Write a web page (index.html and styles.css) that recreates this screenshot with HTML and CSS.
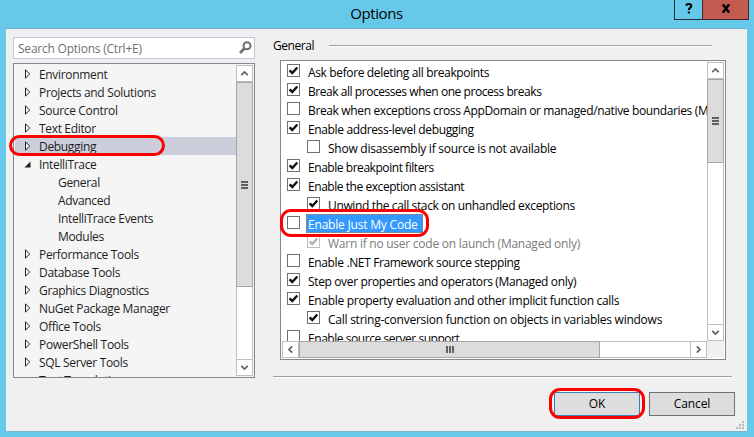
FILE: index.html
```html
<!DOCTYPE html>
<html lang="en">
<head>
<meta charset="utf-8">
<title>Options</title>
<link rel="stylesheet" href="styles.css">
</head>
<body>
<svg width="0" height="0" class="defs">
  <symbol id="closed" viewBox="0 0 6 10"><path d="M.5 .9v8.200L4.700 5z" fill="#fff" stroke="#1e1e1e" stroke-width="1"/></symbol>
  <symbol id="open" viewBox="0 0 7 7"><path d="M6.500 .5v6h-6z" fill="#1e1e1e"/></symbol>
  <symbol id="check" viewBox="0 0 11 11"><path d="M1.600 5.400L4.300 8L9.300 2.500" fill="none" stroke="currentColor" stroke-width="2.500"/></symbol>
  <symbol id="chev" viewBox="0 0 9 9"><path d="M1.300 6.200L4.500 3L7.700 6.200" fill="none" stroke="#606060" stroke-width="1.700"/></symbol>
</svg>
<div class="window">
  <header class="titlebar">
    <h1>Options</h1>
    <button class="cap help"><svg width="8" height="11" viewBox="0 0 8 11"><path d="M1.200 2.600Q1.500 1 3.800 1Q6.300 1 6.300 3Q6.300 4.300 4.800 5Q3.900 5.500 3.900 7" fill="none" stroke="#000" stroke-width="2"/><path d="M2.800 8.500h2.200v2H2.800z"/></svg></button>
    <button class="cap close"><svg width="10" height="9" viewBox="0 0 10 9"><path d="M1.800 .3L8.200 8.700M8.200 .3L1.800 8.700" stroke="#000" stroke-width="2.500"/></svg></button>
  </header>
  <main class="client">
    <div class="panes">
      <section class="nav">
        <div class="search"><span>Search Options (Ctrl+E)</span><svg width="13" height="13" viewBox="0 0 13 13"><circle cx="8" cy="4.700" r="3.500" fill="none" stroke="#717171" stroke-width="2"/><path d="M5.300 7.500L1 12" stroke="#717171" stroke-width="2.600"/></svg></div>
        <div class="tree">
          <ul class="nodes">
            <li><svg class="tri"><use href="#closed"/></svg><span>Environment</span></li>
            <li><svg class="tri"><use href="#closed"/></svg><span>Projects and Solutions</span></li>
            <li><svg class="tri"><use href="#closed"/></svg><span>Source Control</span></li>
            <li><svg class="tri"><use href="#closed"/></svg><span>Text Editor</span></li>
            <li class="current"><svg class="tri"><use href="#closed"/></svg><span>Debugging</span><i class="ring ring-tree"></i></li>
            <li><svg class="tri expanded"><use href="#open"/></svg><span>IntelliTrace</span></li>
            <li class="child"><span>General</span></li>
            <li class="child"><span>Advanced</span></li>
            <li class="child"><span>IntelliTrace Events</span></li>
            <li class="child"><span>Modules</span></li>
            <li><svg class="tri"><use href="#closed"/></svg><span>Performance Tools</span></li>
            <li><svg class="tri"><use href="#closed"/></svg><span>Database Tools</span></li>
            <li><svg class="tri"><use href="#closed"/></svg><span>Graphics Diagnostics</span></li>
            <li><svg class="tri"><use href="#closed"/></svg><span>NuGet Package Manager</span></li>
            <li><svg class="tri"><use href="#closed"/></svg><span>Office Tools</span></li>
            <li><svg class="tri"><use href="#closed"/></svg><span>PowerShell Tools</span></li>
            <li><svg class="tri"><use href="#closed"/></svg><span>SQL Server Tools</span></li>
            <li class="last"><span>Text Templating</span></li>
          </ul>
          <div class="vbar">
            <div class="sbtn"><svg class="chev"><use href="#chev"/></svg></div>
            <div class="thumb tree-thumb"><i class="grip"></i></div>
            <div class="sbtn end"><svg class="chev down"><use href="#chev"/></svg></div>
          </div>
        </div>
      </section>
      <section class="page">
        <div class="heading"><span>General</span><hr></div>
        <div class="list">
          <ul class="options">
            <li><b class="box"><svg><use href="#check"/></svg></b><span>Ask before deleting all breakpoints</span></li>
            <li class="tight"><b class="box"><svg><use href="#check"/></svg></b><span>Break all processes when one process breaks</span></li>
            <li><b class="box"></b><span>Break when exceptions cross AppDomain or managed/native boundaries (Managed only)</span></li>
            <li><b class="box"><svg><use href="#check"/></svg></b><span>Enable address-level debugging</span></li>
            <li class="sub loose"><b class="box"></b><span>Show disassembly if source is not available</span></li>
            <li class="tight"><b class="box"><svg><use href="#check"/></svg></b><span>Enable breakpoint filters</span></li>
            <li class="tight"><b class="box"><svg><use href="#check"/></svg></b><span>Enable the exception assistant</span></li>
            <li class="sub"><b class="box"><svg><use href="#check"/></svg></b><span>Unwind the call stack on unhandled exceptions</span></li>
            <li class="selected"><b class="box"></b><span>Enable Just My Code</span><i class="ring ring-option"></i></li>
            <li class="sub disabled loose"><b class="box"><svg><use href="#check"/></svg></b><span>Warn if no user code on launch (Managed only)</span></li>
            <li><b class="box"></b><span>Enable .NET Framework source stepping</span></li>
            <li><b class="box"><svg><use href="#check"/></svg></b><span>Step over properties and operators (Managed only)</span></li>
            <li class="medium"><b class="box"><svg><use href="#check"/></svg></b><span>Enable property evaluation and other implicit function calls</span></li>
            <li class="sub loose"><b class="box"><svg><use href="#check"/></svg></b><span>Call string-conversion function on objects in variables windows</span></li>
            <li class="tight"><b class="box"></b><span>Enable source server support</span></li>
          </ul>
          <div class="vbar">
            <div class="sbtn"><svg class="chev"><use href="#chev"/></svg></div>
            <div class="thumb list-thumb"><i class="grip"></i></div>
            <div class="sbtn end"><svg class="chev down"><use href="#chev"/></svg></div>
          </div>
          <div class="hbar">
            <div class="sbtn"><svg class="chev left"><use href="#chev"/></svg></div>
            <div class="thumb h-thumb"><i class="grip vertical"></i></div>
            <div class="sbtn end"><svg class="chev right"><use href="#chev"/></svg></div>
          </div>
          <div class="corner"></div>
        </div>
        <hr class="divider">
      </section>
    </div>
    <footer class="actions">
      <button class="btn default">OK<i class="ring ring-ok"></i></button>
      <button class="btn">Cancel</button>
    </footer>
    <svg class="resize" width="8" height="8" viewBox="0 0 8 8" fill="#b8b8b8"><path d="M6 0h2v2H6zM3 3h2v2H3zM6 3h2v2H6zM0 6h2v2H0zM3 6h2v2H3zM6 6h2v2H6z"/></svg>
  </main>
</div>
</body>
</html>
```
FILE: styles.css
```css
* { box-sizing: border-box; }
body { margin: 0; font: 12px/18px "Open Sans", "Noto Sans", sans-serif; color: #000; overflow: hidden; }
.defs { position: absolute; }
ul { list-style: none; margin: 0; padding: 0; }
svg { display: block; flex: none; }
button { font: inherit; padding: 0; color: #000; }
.window { width: 754px; height: 437px; background: #66c9ea; padding: 0 7px 5px 6px; }
.titlebar { height: 28px; display: flex; position: relative; justify-content: flex-end; }
.titlebar h1 { position: absolute; inset: 3px 0 auto 0; margin: 0; text-align: center; font-size: 15px; line-height: 20px; font-weight: 400; letter-spacing: -.4px; }
.cap { position: relative; height: 20px; border: 1px solid #1e2d33; border-top: 0; display: flex; align-items: center; justify-content: center; padding-bottom: 2px; }
.help { width: 29px; background: #66c9ea; margin-right: -1px; }
.close { width: 47px; background: #c35b50; border-color: #4b2724; margin-right: -2px; }
.client { height: 404px; background: #f0f0f0; border-top: 1px solid #6facc9; border-bottom: 1px solid #7fb5cb; position: relative; }
.panes { display: flex; padding: 8px 0 0 7px; height: 363px; }
.nav { width: 242px; margin-right: 18px; }
.search { height: 22px; border: 1px solid #c5c8dc; background: #fff; color: #717171; display: flex; align-items: center; justify-content: space-between; padding: 0 2px 2px 4px; margin-bottom: 4px; letter-spacing: -.22px; }
.search span { position: relative; top: 2px; }
.tree { height: 315px; border: 1px solid #828790; padding: 1px; background: #f5f5f5; display: flex; }
.nodes { flex: 1; height: 311px; color: #1e1e1e; letter-spacing: -.33px; }
.nodes li { height: 18px; display: flex; align-items: center; padding-left: 10px; position: relative; }
.nodes span { padding-top: 1px; }
.nodes .child { padding-left: 43px; }
.nodes .last { height: 6px; margin-bottom: -1px; overflow: hidden; align-items: flex-start; padding-left: 24px; }
.nodes .current { background: #cccedb; }
.tri { width: 6px; height: 10px; margin-right: 8px; }
.expanded { width: 7px; height: 7px; margin: 0 8px 0 -1px; }
.vbar { width: 17px; border: solid #bfbfbf; border-width: 0 1px; background: #fff; display: flex; flex-direction: column; align-items: center; }
.sbtn { width: 17px; height: 17px; flex: none; border: 1px solid #bfbfbf; background: #fff; display: flex; align-items: center; justify-content: center; }
.end { margin-top: auto; }
.chev { width: 9px; height: 9px; }
.down { transform: rotate(180deg); }
.left { transform: rotate(-90deg); }
.right { transform: rotate(90deg); }
.thumb { flex: none; background: #dcdcdc; border: 1px solid #a6a6a6; width: 17px; display: flex; align-items: center; justify-content: center; }
.tree-thumb { height: 205px; }
.list-thumb { height: 84px; }
.grip { width: 7px; height: 8px; background: repeating-linear-gradient(#606060 0 2px, transparent 2px 3px); }
.vertical { width: 8px; height: 7px; background: repeating-linear-gradient(90deg, #606060 0 2px, transparent 2px 3px); }
.page { flex: 1; padding-right: 9px; }
.heading { height: 18px; display: flex; align-items: center; margin-bottom: 5px; letter-spacing: -.45px; padding-right: 26px; }
.heading span { width: 56px; padding-bottom: 1px; }
hr { margin: 0; border: 0; height: 2px; background: #fff; border-top: 1px solid #a0a0a0; }
.heading hr { flex: 1; }
.list { width: 446px; height: 300px; margin-left: 7px; border: 1px solid #828790; padding: 1px; background: #fff; display: grid; grid-template: 279px 17px / 425px 17px; }
.options { clip-path: inset(0 0 0 -4px); height: 279px; letter-spacing: -.36px; }
.options li { height: 19px; display: flex; padding: 2px 0 0 5px; white-space: nowrap; }
.options .sub { padding-left: 25px; }
.options span { height: 19px; line-height: 19px; margin: -1px 0 0 6px; padding: 0 2px; }
.options .loose { letter-spacing: -.25px; }
.options .medium { letter-spacing: -.31px; }
.options .tight { letter-spacing: -.45px; }
.box { width: 13px; height: 13px; flex: none; border: 1px solid #707070; background: #fff; color: #111; }
.box svg { width: 11px; height: 11px; }
.disabled { color: #7a7a7a; }
.disabled .box { border-color: #bfbfbf; color: #b5b5b5; }
.options .selected { position: relative; letter-spacing: -.2px; }
.options .selected span { width: 117px; margin-top: -2px; background: #3399ff; color: #fff; outline: 1px dotted #d07a28; outline-offset: -1px; line-height: 21px; }
.hbar { height: 17px; border: solid #bfbfbf; border-width: 1px 0; display: flex; align-items: center; }
.hbar .end { margin: 0 0 0 auto; }
.h-thumb { width: 301px; height: 17px; }
.corner { background: #f0f0f0; }
.divider { margin: 16px -1px 0 0; width: 459px; }
.actions { display: flex; justify-content: flex-end; gap: 9px; padding-right: 12px; }
.btn { width: 86px; height: 24px; background: #dddddd; border: 1px solid #707070; position: relative; line-height: 20px; letter-spacing: -.1px; }
.default { border-color: #3c7fb1; }
.ring { position: absolute; border: 3px solid #fa0000; pointer-events: none; }
.ring-tree { left: -6px; top: -2px; width: 156px; height: 21px; border-radius: 11px; }
.ring-option { left: -2px; top: -5px; width: 149px; height: 28px; border-radius: 11px; }
.ring-ok { left: -6px; top: -5px; width: 96px; height: 31px; border-radius: 11px; }
.resize { position: absolute; right: 3px; bottom: 2px; }
```
